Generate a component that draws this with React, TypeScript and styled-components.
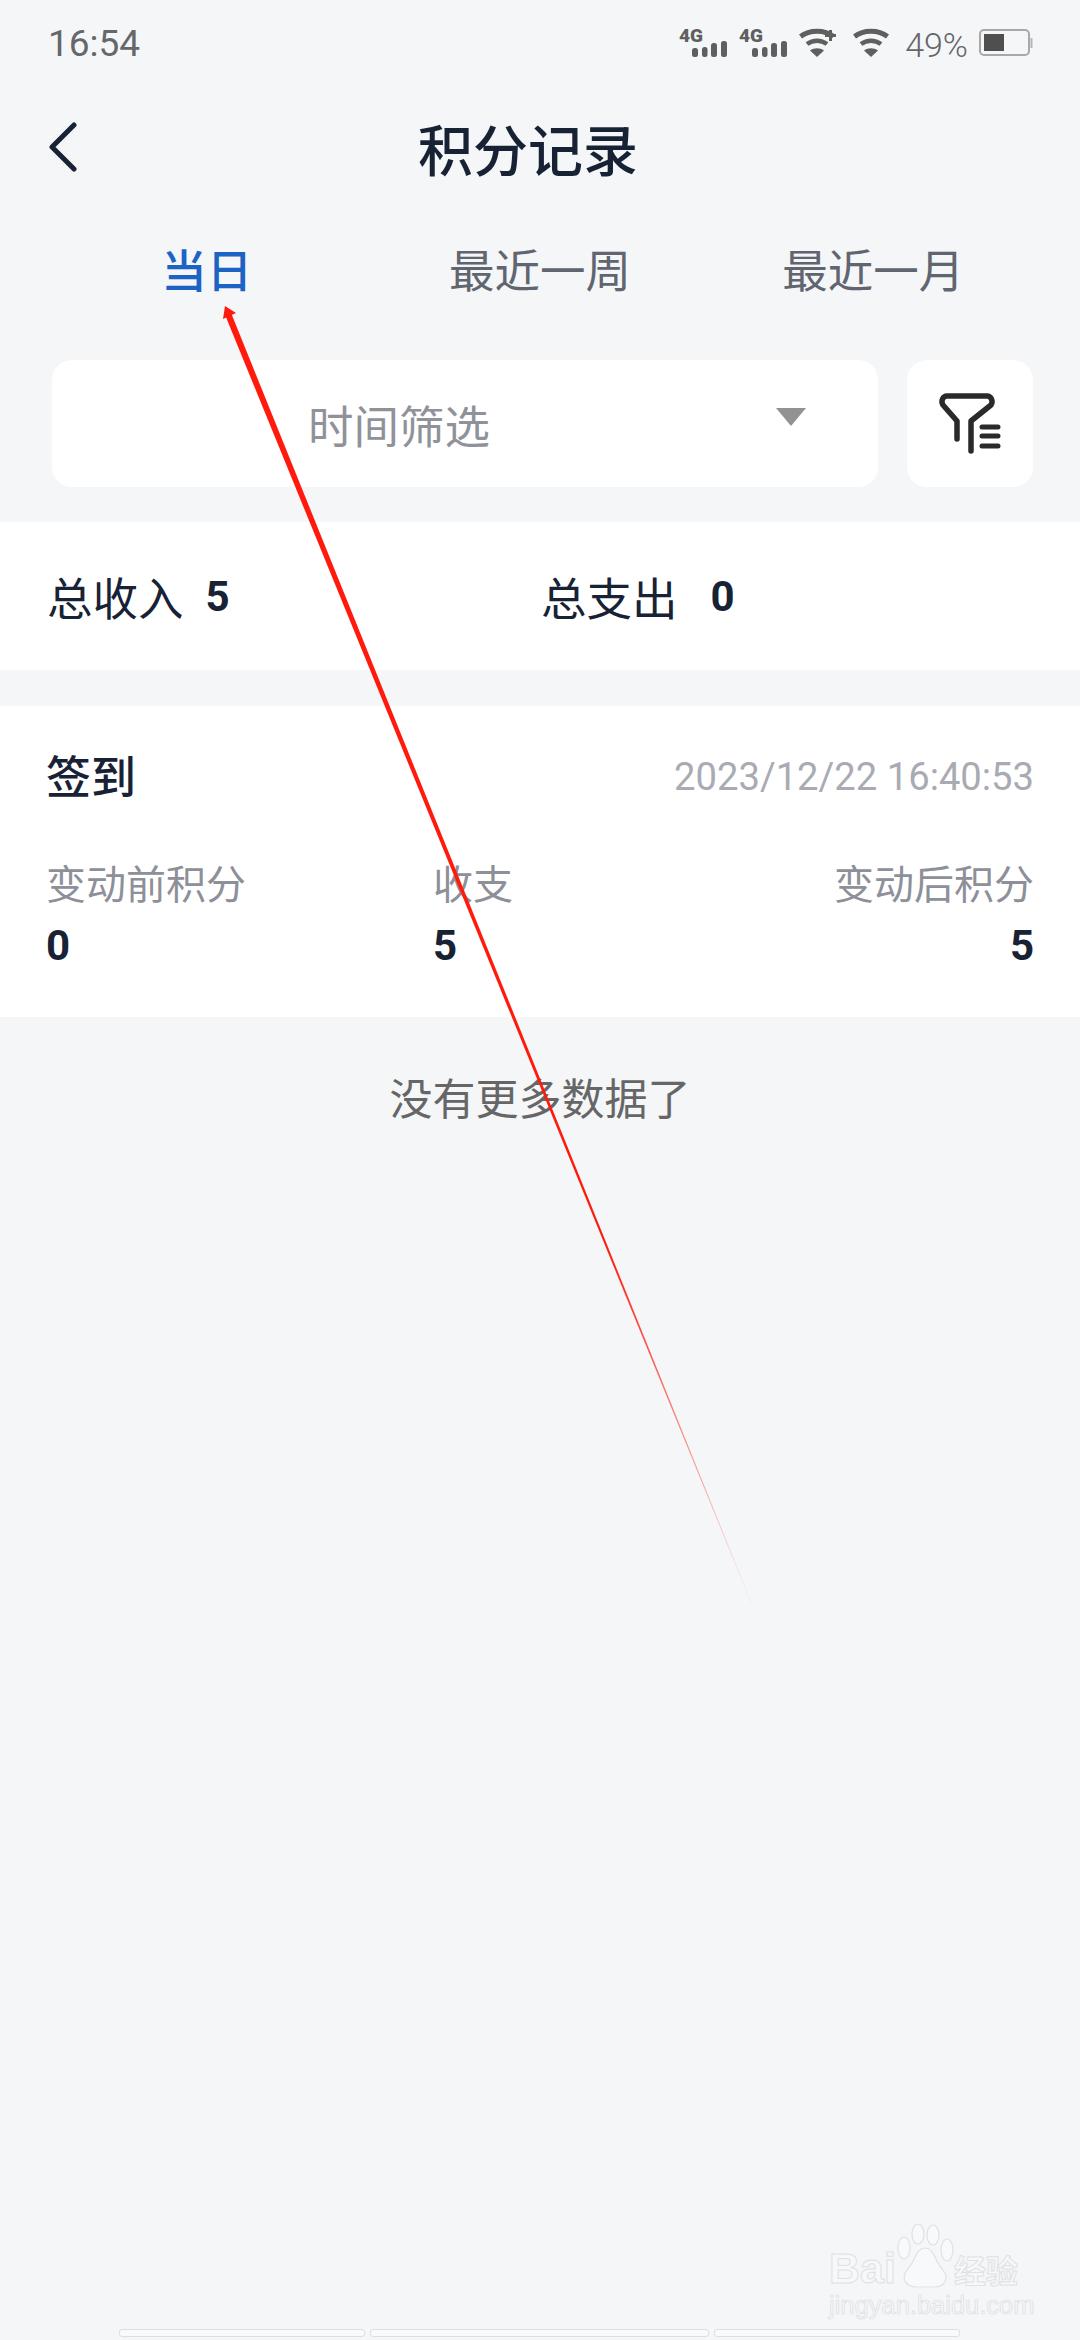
import styled, { createGlobalStyle } from 'styled-components';

const GlobalStyle = createGlobalStyle`
  html, body {
    margin: 0;
    padding: 0;
    background: #f4f6f8;
  }
  * {
    box-sizing: border-box;
  }
`;

const Page = styled.div`
  position: relative;
  width: 1080px;
  height: 2340px;
  overflow: hidden;
  background: #f4f6f8;
  font-family: 'Noto Sans CJK SC', 'Noto Sans', sans-serif;
  color: #182235;
`;

const StatusBar = styled.div`
  height: 86px;
  padding: 0 47px 0 48px;
  display: flex;
  align-items: center;
  justify-content: space-between;
  color: #666769;
`;

const Time = styled.span`
  font-family: Roboto, sans-serif;
  font-size: 37px;
  line-height: 1;
`;

const StatusIcons = styled.div`
  display: flex;
  align-items: center;
`;

const IconSlot = styled.span<{ $left?: number }>`
  display: flex;
  margin-left: ${({ $left }) => $left ?? 0}px;
`;

const Percent = styled.span`
  font-family: Roboto, sans-serif;
  font-size: 34px;
  font-weight: 300;
  line-height: 1;
  margin: 3px 11px 0 14px;
`;

const Nav = styled.div`
  height: 128px;
  padding: 0 72px 6px 48px;
  display: grid;
  grid-template-columns: 1fr auto 1fr;
  align-items: center;
`;

const Title = styled.div`
  font-size: 55px;
  font-weight: 500;
  line-height: 1;
`;

const Tabs = styled.div`
  height: 116px;
  padding: 0 40px 6px 40px;
  display: grid;
  grid-template-columns: repeat(3, 1fr);
  align-items: center;
`;

const Tab = styled.div<{ $active?: boolean }>`
  text-align: center;
  font-size: 45.5px;
  line-height: 1;
  font-weight: ${({ $active }) => ($active ? 500 : 400)};
  color: ${({ $active }) => ($active ? '#1d63c4' : '#60656f')};
`;

const FilterRow = styled.div`
  margin-top: 30px;
  padding: 0 47px 0 52px;
  display: flex;
  gap: 29px;
`;

const Select = styled.div`
  width: 826px;
  height: 127px;
  padding: 0 72px 0 256px;
  display: flex;
  align-items: center;
  justify-content: space-between;
  background: #fff;
  border-radius: 20px;
  font-size: 45.5px;
  color: #8f9299;
`;

const Caret = styled.span`
  width: 0;
  height: 0;
  margin-top: -14px;
  border-left: 15px solid transparent;
  border-right: 15px solid transparent;
  border-top: 18px solid #929292;
`;

const FilterButton = styled.div`
  width: 126px;
  height: 127px;
  display: flex;
  align-items: center;
  justify-content: center;
  background: #fff;
  border-radius: 20px;
`;

const Summary = styled.div`
  margin-top: 35px;
  height: 148px;
  padding: 2px 0 0 47px;
  display: grid;
  grid-template-columns: 494px 1fr;
  align-items: center;
  background: #fff;
`;

const SummaryItem = styled.div`
  display: flex;
  align-items: center;
  font-size: 45.5px;
  line-height: 1;
`;

const SummaryValue = styled.span<{ $gap: number }>`
  margin-left: ${({ $gap }) => $gap}px;
  font-family: Roboto, sans-serif;
  font-size: 42px;
  font-weight: 700;
`;

const Card = styled.div`
  margin-top: 36px;
  height: 311px;
  padding: 46px 46px 0 46px;
  background: #fff;
`;

const CardHead = styled.div`
  display: flex;
  align-items: center;
  justify-content: space-between;
  height: 46px;
`;

const CardTitle = styled.div`
  font-size: 45px;
  font-weight: 500;
  line-height: 1;
  margin-top: -2px;
`;

const CardDate = styled.div`
  font-family: Roboto, sans-serif;
  font-size: 38.2px;
  line-height: 1;
  margin-top: 4px;
  color: #a9abb3;
`;

const Stats = styled.div`
  margin-top: 63px;
  display: grid;
  grid-template-columns: 387px 1fr 1fr;
  row-gap: 20px;
`;

const StatLabel = styled.div<{ $right?: boolean }>`
  font-size: 40px;
  line-height: 43px;
  color: #8e9099;
  text-align: ${({ $right }) => ($right ? 'right' : 'left')};
`;

const StatValue = styled.div<{ $right?: boolean }>`
  font-family: Roboto, sans-serif;
  font-size: 42px;
  line-height: 43px;
  font-weight: 700;
  text-align: ${({ $right }) => ($right ? 'right' : 'left')};
`;

const NoMore = styled.div`
  height: 158px;
  display: flex;
  align-items: center;
  justify-content: center;
  font-size: 43px;
  color: #666;
`;

const ArrowLayer = styled.svg`
  position: absolute;
  left: 0;
  top: 0;
  pointer-events: none;
`;

const Watermark = styled.div`
  position: absolute;
  left: 829px;
  top: 2224px;
  width: 200px;
`;

const MarkRow = styled.div`
  display: flex;
  align-items: flex-end;
  height: 64px;
`;

const MarkLatin = styled.span`
  font-family: 'Liberation Sans', sans-serif;
  font-size: 43px;
  font-weight: 700;
  line-height: 40px;
  color: #f7f8fa;
  -webkit-text-stroke: 1px #e0e1e4;
`;

const MarkCjk = styled.span`
  font-size: 32px;
  font-weight: 700;
  line-height: 38px;
  white-space: nowrap;
  color: #f7f8fa;
  -webkit-text-stroke: 1px #e0e1e4;
`;

const MarkUrl = styled.div`
  margin-top: 4px;
  font-family: 'Liberation Sans', sans-serif;
  font-size: 25.5px;
  line-height: 26px;
  color: #f7f8fa;
  -webkit-text-stroke: 0.7px #dcdde1;
  white-space: nowrap;
`;

const BottomBars = styled.div`
  position: absolute;
  left: 119px;
  top: 2329px;
  display: flex;
  gap: 5px;
`;

const BottomBar = styled.div<{ $width: number }>`
  width: ${({ $width }) => $width}px;
  height: 8px;
  background: #f9fafb;
  border: 1px solid #dcdee1;
  border-radius: 3px;
`;

const Signal = () => (
  <svg width="48" height="32" viewBox="0 0 48 32" fill="#5f5f5f" overflow="visible">
    <text x="0" y="14.5" fontFamily="Roboto, sans-serif" fontSize="19" fontWeight="900">
      4G
    </text>
    <rect x="13" y="21" width="6" height="9" rx="2.5" />
    <rect x="23" y="20" width="5.5" height="10" rx="2.5" />
    <rect x="32" y="16" width="6" height="14" rx="2.5" />
    <rect x="42" y="14" width="6" height="16" rx="2.5" />
  </svg>
);

const Wifi = ({ plus }: { plus?: boolean }) => (
  <svg width="38" height="30" viewBox="0 0 38 30" fill="none" stroke="#5f5f5f">
    <path d="M1.5 8.5C10.5 1.5 25.5 1.5 34.5 8.5" strokeWidth="5" />
    <path d="M8 16C14 11.5 22 11.5 28 16" strokeWidth="4.5" />
    <path d="M18 29L11 22.5C15 19.5 21 19.5 25 22.5Z" fill="#5f5f5f" stroke="none" />
    {plus && <path d="M26 7.5H37M31.5 2V13" stroke="#5f5f5f" strokeWidth="3" />}
  </svg>
);

const Battery = () => (
  <svg width="54" height="28" viewBox="0 0 54 28" fill="none">
    <rect x="1" y="1" width="49" height="25" rx="4" stroke="#a8a8a8" strokeWidth="2" />
    <rect x="5" y="5" width="20" height="17" fill="#4f4f4f" />
    <rect x="51.5" y="9" width="2" height="10" fill="#b5b5b5" />
  </svg>
);

const BackIcon = () => (
  <svg width="30" height="50" viewBox="0 0 30 50" fill="none">
    <path
      d="M26 3L4 25L26 47"
      stroke="#182235"
      strokeWidth="5"
      strokeLinecap="round"
      strokeLinejoin="round"
    />
  </svg>
);

const FunnelIcon = () => (
  <svg width="62" height="62" viewBox="0 0 62 62" fill="none" stroke="#2a2a2a" strokeLinecap="round">
    <path
      d="M18 46V28L4 12C1.5 8 4 3 8 3H48C52 3 54.5 8 52 12L32 28V58"
      strokeWidth="5.5"
      strokeLinejoin="round"
    />
    <path d="M43 34H59M43 43H59M43 53H59" strokeWidth="5" />
  </svg>
);

const BaiduPaw = () => (
  <svg width="58" height="64" viewBox="0 0 58 64" fill="#f8f9fa" stroke="#e0e1e4" strokeWidth="1.2">
    <ellipse cx="22" cy="10" rx="6" ry="10" />
    <ellipse cx="37" cy="11" rx="6" ry="10" />
    <ellipse cx="8" cy="24" rx="6" ry="11" />
    <ellipse cx="51" cy="26" rx="6" ry="11" />
    <path d="M29 24C20 24 20 36 11 46C4 55 11 63 20 63H38C48 63 54 55 47 46C38 36 38 24 29 24Z" />
  </svg>
);

const ArrowOverlay = () => (
  <ArrowLayer width="1080" height="2340" viewBox="0 0 1080 2340">
    <defs>
      <linearGradient
        id="arrowFade"
        gradientUnits="userSpaceOnUse"
        x1="226"
        y1="308"
        x2="752"
        y2="1604"
      >
        <stop offset="0" stopColor="#ff1a0d" />
        <stop offset="0.72" stopColor="#ff1a0d" />
        <stop offset="1" stopColor="#ff1a0d" stopOpacity="0.05" />
      </linearGradient>
    </defs>
    <polygon points="225.5,316 231.5,314 752,1604 751.5,1604" fill="url(#arrowFade)" />
    <polygon points="225,306 236,313 223,319" fill="#ff1a0d" />
  </ArrowLayer>
);

export default function App() {
  return (
    <>
      <GlobalStyle />
      <Page>
        <StatusBar>
          <Time>16:54</Time>
          <StatusIcons>
            <Signal />
            <IconSlot $left={12}>
              <Signal />
            </IconSlot>
            <IconSlot $left={12}>
              <Wifi plus />
            </IconSlot>
            <IconSlot $left={16}>
              <Wifi />
            </IconSlot>
            <Percent>49%</Percent>
            <Battery />
          </StatusIcons>
        </StatusBar>

        <Nav>
          <BackIcon />
          <Title>积分记录</Title>
        </Nav>

        <Tabs>
          <Tab $active>当日</Tab>
          <Tab>最近一周</Tab>
          <Tab>最近一月</Tab>
        </Tabs>

        <FilterRow>
          <Select>
            时间筛选
            <Caret />
          </Select>
          <FilterButton>
            <FunnelIcon />
          </FilterButton>
        </FilterRow>

        <Summary>
          <SummaryItem>
            总收入
            <SummaryValue $gap={22}>5</SummaryValue>
          </SummaryItem>
          <SummaryItem>
            总支出
            <SummaryValue $gap={33}>0</SummaryValue>
          </SummaryItem>
        </Summary>

        <Card>
          <CardHead>
            <CardTitle>签到</CardTitle>
            <CardDate>2023/12/22 16:40:53</CardDate>
          </CardHead>
          <Stats>
            <StatLabel>变动前积分</StatLabel>
            <StatLabel>收支</StatLabel>
            <StatLabel $right>变动后积分</StatLabel>
            <StatValue>0</StatValue>
            <StatValue>5</StatValue>
            <StatValue $right>5</StatValue>
          </Stats>
        </Card>

        <NoMore>没有更多数据了</NoMore>

        <ArrowOverlay />

        <Watermark>
          <MarkRow>
            <MarkLatin>Bai</MarkLatin>
            <BaiduPaw />
            <MarkCjk>经验</MarkCjk>
          </MarkRow>
          <MarkUrl>jingyan.baidu.com</MarkUrl>
        </Watermark>

        <BottomBars>
          <BottomBar $width={246} />
          <BottomBar $width={339} />
          <BottomBar $width={246} />
        </BottomBars>
      </Page>
    </>
  );
}
